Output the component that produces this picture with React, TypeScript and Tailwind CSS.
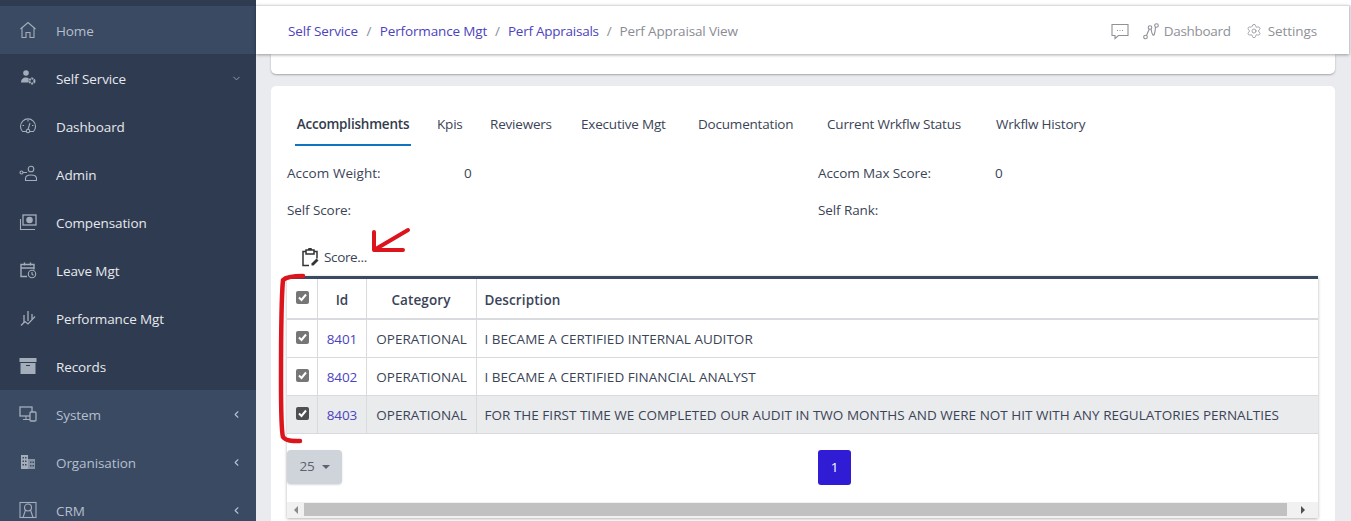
import React from "react";
import { ChevronDown, ChevronLeft, Settings } from "lucide-react";

const I = ({ children }: { children: React.ReactNode }) => (
  <svg width="18" height="18" viewBox="0 0 18 18" fill="none" stroke="currentColor" strokeWidth="1.1" className="shrink-0">{children}</svg>
);

const icons: Record<string, React.ReactNode> = {
  home: <I><path d="M1.500 8 9 1.500 16.500 8M3 7v9.500h4v-5h4v5h4V7" /></I>,
  self: (
    <svg width="18" height="18" viewBox="0 0 18 18" fill="currentColor"><circle cx="7" cy="4" r="2.800" /><path d="M2 13.500c0-3 2-5 5-5 1.200 0 2 .2 2.600.6V13.500z" /><circle cx="13" cy="12" r="2.500" fill="none" stroke="currentColor" strokeWidth="2" strokeDasharray="2 0.700" /></svg>
  ),
  dash: <I><path d="M3.500 14.500A7.500 7.500 0 1 1 14.500 14.500H11M7 14.500H3.500M9 12.500 11 6" /><circle cx="9" cy="14" r="1.700" /><path d="M9 3v1.500M3.500 8.500H5M14.500 8.500H13" /></I>,
  admin: <I><circle cx="12" cy="4" r="2.800" /><path d="M6.500 15.500h11v-2c0-2-2-3.500-5.500-3.500s-5.500 1.500-5.500 3.500zM4 7.500h4" /><circle cx="2.500" cy="7.500" r="1.500" /></I>,
  comp: <I><path d="M1.500 6v10.500H16" /><rect x="4" y="2" width="13" height="10" strokeWidth="1.300" /><circle cx="10.500" cy="7" r="2.700" fill="currentColor" /></I>,
  leave: <I><path d="M8 15.500H2V3.500h13v5M2 7h13M5.500 1.500v3M11.500 1.500v3" strokeWidth="1.400" /><circle cx="13" cy="13" r="3.700" /><path d="M13 11v2.200l1.500 1" /></I>,
  perf: <I><path d="M5 6v8M9 2v10M13 5v5" strokeWidth="1.300" /><path d="M2 16.500 6 12.500 9 15 16 7.500" strokeWidth="1.200" /></I>,
  records: <svg width="18" height="18" viewBox="0 0 18 18" fill="currentColor"><rect x="0.500" y="1" width="17" height="4" /><path d="M1.500 6h15v11h-15z" /><rect x="7" y="8" width="4" height="1" fill="#2f3b50" /></svg>,
  system: <I><rect x="1" y="2" width="12" height="9" strokeWidth="1.300" /><path d="M7 11v3M4 14.500h7" /><rect x="11" y="7" width="6" height="9" rx="1" fill="#3a4a63" strokeWidth="1.300" /></I>,
  org: <svg width="18" height="18" viewBox="0 0 18 18" fill="currentColor"><path d="M2 2h7v14H2z" /><path d="M9 6h7v10H9z" opacity=".75" /><path d="M3.500 4h1.500v1.500H3.500zM6 4h1.500v1.500H6zM3.500 7.500h1.500V9H3.500zM6 7.500h1.500V9H6zM3.500 11h1.500v1.500H3.500zM6 11h1.500v1.500H6zM11 8.500h1.500V10H11zM11 12h1.500v1.500H11zM13.500 8.500H15V10h-1.500zM13.500 12H15v1.500h-1.500z" fill="#3a4a63" /></svg>,
  crm: <I><rect x="1" y="1.500" width="16" height="15" strokeWidth="1.100" /><circle cx="9" cy="6.500" r="3.500" /><path d="M6.500 9 4 16.500M11.500 9 14 16.500" /></I>,
};

const nav = [
  { t: "Home", i: icons.home, a: true },
  { t: "Self Service", i: icons.self, c: "down" },
  { t: "Dashboard", i: icons.dash },
  { t: "Admin", i: icons.admin },
  { t: "Compensation", i: icons.comp },
  { t: "Leave Mgt", i: icons.leave },
  { t: "Performance Mgt", i: icons.perf },
  { t: "Records", i: icons.records },
  { t: "System", i: icons.system, c: "left", a: true },
  { t: "Organisation", i: icons.org, c: "left", a: true },
  { t: "CRM", i: icons.crm, c: "left", a: true },
];

const Check = ({ dark }: { dark?: boolean }) => (
  <span className={`flex h-[13px] w-[13px] items-center justify-center rounded-[2px] ${dark ? "bg-[#4f4f4f]" : "bg-[#767676]"}`}>
    <svg width="11" height="11" viewBox="0 0 11 11" fill="none" stroke="#fff" strokeWidth="2"><path d="M2 5.500 4.500 8 9 2.500" /></svg>
  </span>
);

const rows = [
  ["8401", "I BECAME A CERTIFIED INTERNAL AUDITOR"],
  ["8402", "I BECAME A CERTIFIED FINANCIAL ANALYST"],
  ["8403", "FOR THE FIRST TIME WE COMPLETED OUR AUDIT IN TWO MONTHS AND WERE NOT HIT WITH ANY REGULATORIES PERNALTIES"],
];

const tabs: [string, string][] = [
  ["Kpis", "w-[53px]"],
  ["Reviewers", "w-[91px]"],
  ["Executive Mgt", "w-[117px]"],
  ["Documentation", "w-[129px]"],
  ["Current Wrkflw Status", "w-[169px]"],
  ["Wrkflw History", "w-[120px]"],
];

export default function App() {
  return (
    <div className="relative flex h-[521px] w-[1351px] overflow-hidden bg-[#eaebee] text-[13.500px] tracking-[-0.1px] text-[#3b4457] [font-family:'Open_Sans','Noto_Sans',sans-serif]">
      <aside className="h-full w-[256px] shrink-0 bg-[#2f3b50] pt-[6px]">
        {nav.map((n) => (
          <div key={n.t} className={`flex h-[48px] items-center pl-[19px] pr-[14px] ${n.a ? "bg-[#3a4a63] text-[#b6bfcc]" : "text-[#e6e9ee]"}`}>
            <span className="flex w-[37px] text-[#a4adba]">{n.i}</span>
            <span className="flex-1 pt-[2px]">{n.t}</span>
            {n.c === "down" && <ChevronDown size={11} strokeWidth={2} className="text-[#9aa3b1]" />}
            {n.c === "left" && <ChevronLeft size={11} strokeWidth={2.500} className="text-[#b6bfcc]" />}
          </div>
        ))}
      </aside>

      <main className="flex min-w-0 flex-1 flex-col">
        <div className="h-[5px] shrink-0 bg-white" />
        <header className="z-10 mr-[2px] flex h-[49px] shrink-0 items-center justify-between border-t border-[#dcdde0] bg-white pl-[32px] pr-[32px] pt-[2px] shadow-[0_1px_3px_rgba(0,0,0,0.35)]">
          <nav className="flex items-center text-[#8a8c95]">
            <span className="text-[#4c43bd]">Self Service</span>
            <span className="mx-[8.500px]">/</span>
            <span className="tracking-[-0.15px] text-[#4c43bd]">Performance Mgt</span>
            <span className="mx-[8px]">/</span>
            <span className="tracking-[-0.25px] text-[#4c43bd]">Perf Appraisals</span>
            <span className="mx-[8px]">/</span>
            <span className="tracking-[-0.15px]">Perf Appraisal View</span>
          </nav>
          <div className="flex items-center text-[#8f9198]">
            <svg width="18" height="17" viewBox="0 0 18 17" fill="none" stroke="currentColor" strokeWidth="1.100" className="mr-[14px]">
              <path d="M1 1.500h16v11H7.500L4 15.500v-3H1z" />
              <path d="M6 7.500h1M8.500 7.500h1M11 7.500h1" />
            </svg>
            <svg width="16" height="17" viewBox="0 0 16 17" fill="none" stroke="currentColor" strokeWidth="1.100" className="mr-[5px]">
              <circle cx="2.500" cy="14" r="1.800" /><circle cx="7" cy="4.500" r="1.800" /><circle cx="13.500" cy="2.500" r="1.800" />
              <path d="M3.500 12.500 6.300 6M8 6c.5 3 1 5 2 6s2-1 2.500-8" />
            </svg>
            <span className="mr-[16px] tracking-[-0.3px]">Dashboard</span>
            <Settings size={16} strokeWidth={1.200} className="mr-[5px] -translate-x-[1px]" />
            <span>Settings</span>
          </div>
        </header>

        <div className="mx-[15px] mr-[16px] h-[20px] shrink-0 rounded-b-[5px] bg-white shadow-[0_1px_2px_rgba(0,0,0,0.3)]" />

        <section className="mx-[15px] mr-[16px] mt-[12px] flex-1 rounded-t-[5px] bg-white px-[16px] pt-[20px]">
          <div className="flex h-[40px] items-stretch tracking-[-0.2px]">
            <div className="ml-[8px] mr-[26px] flex w-[116px] items-center justify-center border-b-2 border-[#0f74bd] pb-[2px] font-semibold text-[#333b4c]">Accomplishments</div>
            {tabs.map(([t, w]) => (
              <div key={t} className={`flex items-center whitespace-nowrap pb-[4px] ${w}`}>{t}</div>
            ))}
          </div>

          <div className="mt-[9px] grid h-[37px] grid-cols-[177px_354px_177px_1fr] items-center">
            <span className="tracking-[0.05px]">Accom Weight:</span><span>0</span>
            <span>Accom Max Score:</span><span>0</span>
          </div>
          <div className="grid h-[37px] grid-cols-[531px_1fr] items-center">
            <span>Self Score:</span><span>Self Rank:</span>
          </div>

          <div className="flex h-[47px] items-center pl-[14px] pt-[10px]">
            <svg width="18" height="19" viewBox="0 0 18 19" fill="none" stroke="#333" strokeWidth="1.500" className="mr-[5px]">
              <path d="M5 3.500H2v14h6M13 3.500h3v7M5 2h8v4H5zM7.500 2a1.500 1.500 0 0 1 3 0" />
              <path d="M10.500 17.500v-2l5-5 2 2-5 5z" fill="#333" stroke="none" />
            </svg>
            <span className="tracking-[-0.35px]">Score...</span>
          </div>

          <div className="mr-[1px] border-t-[3px] border-[#3a4a63] shadow-[0_1px_3px_rgba(0,0,0,0.3)]">
            <table className="w-full table-fixed border-collapse">
              <thead>
                <tr className="h-[40px] border-b-2 border-[#d9dade] text-[#3a4458]">
                  <th className="w-[30px] border-r border-[#d9dade] p-0 pb-[2px] pl-[1px] font-normal"><span className="flex justify-center"><Check /></span></th>
                  <th className="w-[49px] border-r border-[#d9dade] p-0 pl-[1px] pt-[3px] font-semibold">Id</th>
                  <th className="w-[110px] border-r border-[#d9dade] p-0 pt-[3px] font-semibold tracking-[0.1px]">Category</th>
                  <th className="pl-[8px] pt-[3px] text-left font-semibold tracking-[0.1px]">Description</th>
                </tr>
              </thead>
              <tbody>
                {rows.map(([id, d], i) => (
                  <tr key={id} className={`h-[38px] border-b border-[#d9dade] ${i === 2 ? "bg-[#eaebed]" : ""}`}>
                    <td className="border-r border-[#d9dade] p-0 pb-[2px] pl-[1px]"><span className="flex justify-center"><Check dark={i === 2} /></span></td>
                    <td className="border-r border-[#d9dade] p-0 pl-[1px] pt-[2px] text-center text-[#4c43bd]">{id}</td>
                    <td className="border-r border-[#d9dade] p-0 pl-[1px] pt-[2px] text-center tracking-[0px]">OPERATIONAL</td>
                    <td className="whitespace-nowrap pl-[8px] pt-[2px] tracking-[0.02px]">{d}</td>
                  </tr>
                ))}
              </tbody>
            </table>
            <div className="relative flex h-[68px] items-start justify-center pl-[64px] pt-[16px]">
              <div className="absolute left-0 top-[16px] flex h-[34px] w-[55px] items-center justify-center gap-[7px] rounded-[4px] bg-[#cfd3da] text-[#5b6270] shadow-[0_1px_2px_rgba(0,0,0,0.15)]">
                25
                <span className="mt-[1px] border-x-[4px] border-t-[4px] border-x-transparent border-t-[#5b6270]" />
              </div>
              <div className="flex h-[35px] w-[33px] items-center justify-center rounded-[3px] bg-[#2f1cd4] text-white">1</div>
            </div>
            <div className="flex h-[16px] items-center bg-[#f1f1f1]">
              <span className="flex w-[17px] justify-center"><span className="border-y-[4px] border-r-[4px] border-y-transparent border-r-[#8a8a8a]" /></span>
              <span className="h-[13px] flex-1 bg-[#c1c1c1]" />
              <span className="flex w-[31px] justify-center"><span className="border-y-[4px] border-l-[4px] border-y-transparent border-l-[#505050]" /></span>
            </div>
          </div>
        </section>
      </main>

      <svg className="pointer-events-none absolute left-0 top-0" width="1351" height="521" fill="none" stroke="#dc141c" strokeLinecap="round" strokeLinejoin="round">
        <path d="M408 230 374 250M374 232V250L403 250" strokeWidth="4" />
        <path d="M303 276C294 276 286 277 283 280C281 300 281 330 281 380C281 410 281 430 283 437C286 441 292 441 300 441" strokeWidth="4.500" />
      </svg>
    </div>
  );
}
